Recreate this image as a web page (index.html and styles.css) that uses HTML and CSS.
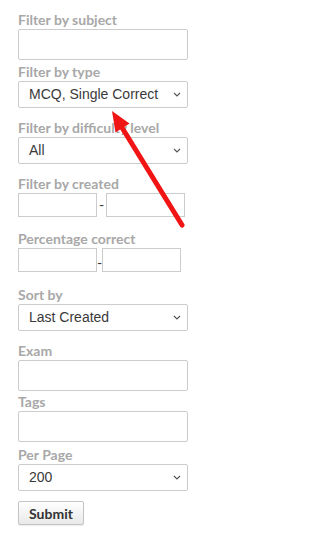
FILE: index.html
```html
<!DOCTYPE html>
<html>
<head>
<meta charset="utf-8">
<link rel="stylesheet" href="styles.css">
</head>
<body>
<form class="filters">
  <div class="field field-subject">
    <label class="lbl">Filter by subject</label>
    <input class="txt" type="text">
  </div>
  <div class="field field-sel">
    <label class="lbl">Filter by type</label>
    <div class="sel">MCQ, Single Correct</div>
  </div>
  <div class="field field-sel">
    <label class="lbl">Filter by difficulty level</label>
    <div class="sel">All</div>
  </div>
  <div class="field field-range">
    <label class="lbl">Filter by created</label>
    <div class="range">
      <input class="txt small" type="text"><span class="dash spaced">-</span><input class="txt small" type="text">
    </div>
  </div>
  <div class="field field-range2">
    <label class="lbl">Percentage correct</label>
    <div class="range">
      <input class="txt small" type="text"><span class="dash low">-</span><input class="txt small" type="text">
    </div>
  </div>
  <div class="field field-sel">
    <label class="lbl">Sort by</label>
    <div class="sel">Last Created</div>
  </div>
  <div class="field field-exam">
    <label class="lbl">Exam</label>
    <input class="txt" type="text">
  </div>
  <div class="field field-tags">
    <label class="lbl">Tags</label>
    <input class="txt" type="text">
  </div>
  <div class="field field-last">
    <label class="lbl">Per Page</label>
    <div class="sel">200</div>
  </div>
  <div class="actions">
    <button class="btn" type="button">Submit</button>
  </div>
</form>
<svg class="arrow" width="213" height="549" viewBox="0 0 213 549" xmlns="http://www.w3.org/2000/svg">
  <line x1="121" y1="126" x2="182" y2="225" stroke="#f01414" stroke-width="5" stroke-linecap="round"/>
  <polygon points="112,111 115.5,132.5 129.5,123.5" fill="#f01414"/>
</svg>
</body>
</html>
```
FILE: styles.css
```css
html, body {
  margin: 0;
  padding: 0;
  background: #ffffff;
}
body {
  font-family: Lato, "Liberation Sans", sans-serif;
  width: 213px;
  height: 549px;
  overflow: hidden;
}
.filters {
  display: flex;
  flex-direction: column;
  padding: 11px 0 0 18px;
}
.field {
  display: flex;
  flex-direction: column;
  align-items: flex-start;
}
.lbl {
  font-size: 14px;
  font-weight: 700;
  line-height: 17px;
  color: #a8a8a8;
  margin-bottom: 1px;
}
.txt {
  box-sizing: border-box;
  width: 170px;
  height: 31px;
  border: 1px solid #cccccc;
  border-radius: 2px;
  background: #fff;
  margin: 0;
  padding: 0 6px;
}
.txt.small {
  width: 79px;
  height: 24px;
  border-radius: 0;
}
.sel {
  box-sizing: border-box;
  width: 170px;
  height: 27px;
  border: 1px solid #cccccc;
  border-radius: 2px;
  padding: 0 0 0 10px;
  font-family: "Liberation Sans", Arial, sans-serif;
  font-size: 14px;
  color: #3a3a3a;
  line-height: 25px;
  background: #fff url("data:image/svg+xml;utf8,<svg xmlns='http://www.w3.org/2000/svg' width='8' height='5' viewBox='0 0 8 5'><path d='M1 1 L4 4 L7 1' fill='none' stroke='%23555' stroke-width='1.1'/></svg>") no-repeat right 6px center;
}
.field-subject { margin-bottom: 3px; }
.field-sel { margin-bottom: 11px; }
.field-range { margin-bottom: 13px; }
.field-range2 { margin-bottom: 14px; }
.field-exam { margin-bottom: 2px; }
.field-tags { margin-bottom: 4px; }
.field-last { margin-bottom: 10px; }
.range {
  display: flex;
  align-items: center;
}
.dash {
  font-size: 14px;
  color: #333;
  line-height: 14px;
}
.dash.spaced {
  padding: 0 2px;
}
.dash.low {
  padding: 0;
  margin-top: 6px;
}
.actions {
  display: flex;
}
.btn {
  box-sizing: border-box;
  width: 66px;
  height: 24px;
  margin: 0;
  padding: 0;
  font-family: Lato, "Liberation Sans", sans-serif;
  font-size: 14px;
  font-weight: 700;
  color: #333333;
  border: 1px solid #c4c4c4;
  border-radius: 2px;
  background: linear-gradient(#ffffff, #e9e9e9);
  box-shadow: 0 1px 1px rgba(0,0,0,0.08);
}
.arrow {
  position: absolute;
  left: 0;
  top: 0;
  pointer-events: none;
}
```
